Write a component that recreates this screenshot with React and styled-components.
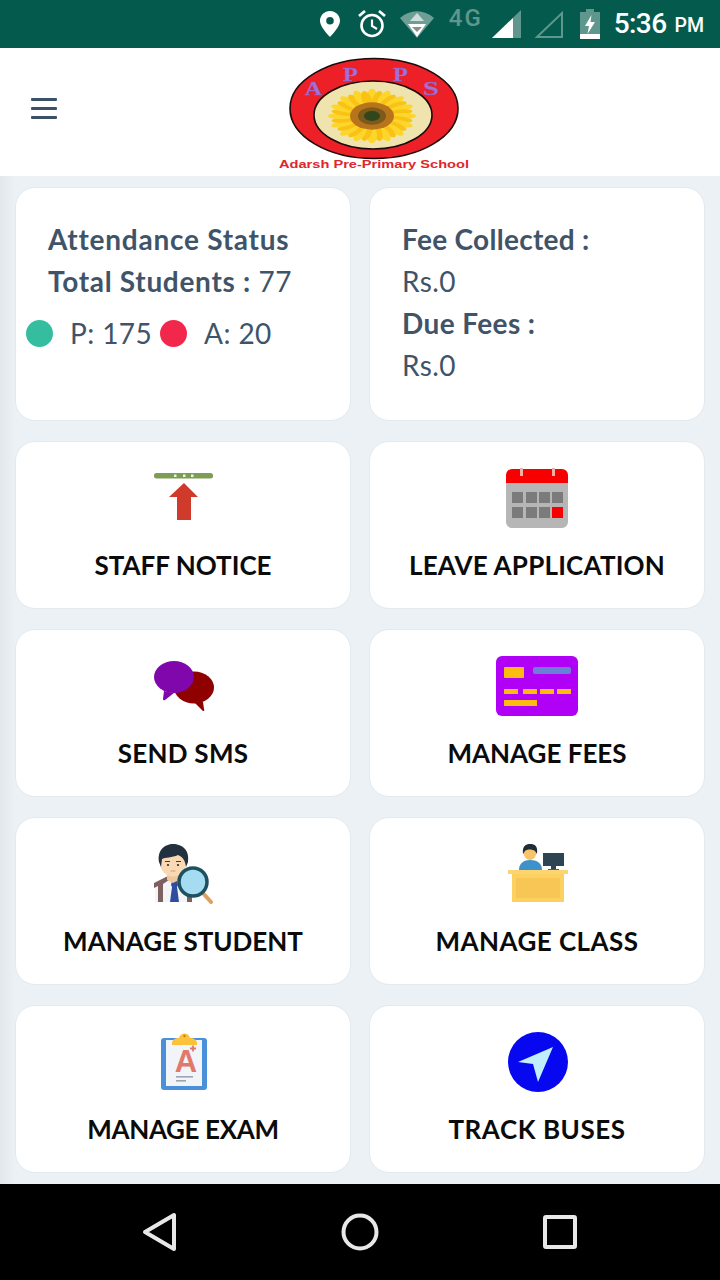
import styled, { createGlobalStyle } from "styled-components";

const GlobalStyle = createGlobalStyle`
  html, body {
    margin: 0;
    padding: 0;
    background: #ebf1f5;
  }
  * {
    box-sizing: border-box;
  }
`;

const Page = styled.div`
  width: 720px;
  height: 1280px;
  display: flex;
  flex-direction: column;
  overflow: hidden;
  font-family: "Lato", "Open Sans", sans-serif;
`;

const StatusBar = styled.div`
  height: 48px;
  background: #055a4e;
  display: flex;
  align-items: center;
  justify-content: flex-end;
  padding-right: 16px;
  color: #fff;
  font-family: "Roboto", sans-serif;
`;

const StatusIcon = styled.svg`
  display: block;
  flex: none;
  margin-left: ${(p) => p.$gap || 0}px;
`;

const NetworkLabel = styled.span`
  margin: 0 9px 12px 15px;
  font-size: 24px;
  line-height: 24px;
  font-weight: 500;
  letter-spacing: 2px;
  color: #5f968d;
`;

const Clock = styled.span`
  margin-left: 14px;
  font-size: 28px;
  line-height: 48px;
  font-weight: 500;
  letter-spacing: -0.6px;
`;

const Meridiem = styled.span`
  margin-left: 8px;
  font-size: 19.5px;
  line-height: 48px;
  font-weight: 500;
  padding-top: 3px;
`;

const Header = styled.header`
  height: 128px;
  background: #fff;
  display: flex;
  align-items: center;
  padding-left: 31px;
`;

const MenuButton = styled.div`
  width: 26px;
  display: flex;
  flex-direction: column;
  gap: 6px;
  margin-top: -8px;

  span {
    display: block;
    height: 3px;
    border-radius: 1px;
    background: #3d5166;
  }
`;

const Logo = styled.svg`
  display: block;
  margin-left: 203px;
`;

const Main = styled.main`
  flex: 1;
  display: grid;
  grid-template-columns: 336px 336px;
  grid-template-rows: 234px repeat(4, 168px);
  gap: 20px 18px;
  padding: 11px 15px;
  background: linear-gradient(to right, #e2e8ec, #ebf1f5 16px);
`;

const Card = styled.section`
  background: #fff;
  border: 1px solid #e3e9ed;
  border-radius: 20px;
`;

const InfoCard = styled(Card)`
  padding: 30px 0 0 32px;
  color: #3f5468;
  font-size: 28px;
  line-height: 42px;
  letter-spacing: 0.4px;
`;

const InfoLine = styled.div`
  white-space: nowrap;
`;

const Strong = styled.span`
  font-weight: 700;
  letter-spacing: ${(p) => p.$tracking}px;
`;

const CountRow = styled.div`
  display: flex;
  align-items: center;
  margin: 10px 0 0 -22px;
  height: 42px;
`;

const Dot = styled.span`
  width: 27px;
  height: 27px;
  border-radius: 50%;
  background: ${(p) => p.$color};
  margin-right: 17px;
  flex: none;
`;

const Count = styled.span`
  margin-right: 8px;
  white-space: nowrap;
`;

const MenuCard = styled(Card)`
  display: flex;
  flex-direction: column;
  align-items: center;
  padding-top: 26px;
`;

const IconSlot = styled.svg`
  display: block;
  flex: none;
`;

const Label = styled.div`
  margin-top: 21px;
  font-size: 26px;
  line-height: 32px;
  font-weight: 700;
  letter-spacing: ${(p) => p.$tracking || 0}px;
  color: #0b0b0b;
  white-space: nowrap;
`;

const NavBar = styled.nav`
  height: 96px;
  background: #000;
  display: grid;
  grid-template-columns: repeat(3, 200px);
  justify-content: center;
  justify-items: center;
  align-items: center;
`;

const PETALS = Array.from({ length: 32 }, (_, i) => (i * 360) / 32);

const LogoMark = () => (
  <Logo width="230" height="125" viewBox="0 0 230 125">
    <ellipse cx="114" cy="58.5" rx="84" ry="50" fill="#ed2027" stroke="#1a0a0a" strokeWidth="1.6" />
    <ellipse cx="113" cy="65" rx="59" ry="34" fill="#efe3ae" stroke="#1a0a0a" strokeWidth="1.6" />
    <g transform="translate(112 66) scale(1 .62)">
      {PETALS.map((a, i) => (
        <ellipse
          key={a}
          cx="0"
          cy={i % 2 ? -27 : -31}
          rx="5"
          ry={i % 2 ? 14 : 13}
          fill={i % 2 ? "#f9c214" : "#fdd62c"}
          transform={`rotate(${a})`}
        />
      ))}
      <circle r="22" fill="#b8741c" />
      <circle r="14" fill="#7c5a1a" />
      <circle r="8" fill="#32461c" />
    </g>
    <g fontFamily="Liberation Serif" fontWeight="700" fontSize="18" fill="#a56fd6" stroke="#8a60b8" strokeWidth=".3">
      <text x="45" y="45" textLength="17" lengthAdjust="spacingAndGlyphs">A</text>
      <text x="83" y="31" textLength="15" lengthAdjust="spacingAndGlyphs">P</text>
      <text x="133" y="31" textLength="15" lengthAdjust="spacingAndGlyphs">P</text>
      <text x="163" y="45" textLength="16" lengthAdjust="spacingAndGlyphs">S</text>
    </g>
    <text x="19" y="118" fontFamily="Liberation Sans" fontWeight="700" fontSize="11" fill="#e0252e" textLength="190" lengthAdjust="spacingAndGlyphs">
      Adarsh Pre-Primary School
    </text>
  </Logo>
);

const NoticeIcon = () => (
  <IconSlot width="60" height="60" viewBox="0 0 60 60">
    <rect x="1" y="5" width="59" height="5.5" rx="2.5" fill="#7d9d55" />
    <rect x="21" y="6.5" width="2.5" height="2.5" fill="#eef3e6" />
    <rect x="30" y="6.5" width="2.5" height="2.5" fill="#eef3e6" />
    <rect x="38" y="6.5" width="2.5" height="2.5" fill="#eef3e6" />
    <path d="M31 15 L45 29 H38 V52 H24 V29 H16 Z" fill="#d03a2a" />
  </IconSlot>
);

const CalendarIcon = () => (
  <IconSlot width="62" height="60" viewBox="0 0 62 60">
    <path d="M0 15 H62 V54 a6 6 0 0 1 -6 6 H6 a6 6 0 0 1 -6 -6 Z" fill="#b6b6b6" />
    <path d="M0 15 V7 a6 6 0 0 1 6 -6 H56 a6 6 0 0 1 6 6 V15 Z" fill="#f60000" />
    <rect x="14" y="0" width="3" height="8" fill="#e9b4a6" />
    <rect x="46" y="0" width="3" height="8" fill="#e9b4a6" />
    {[6, 20, 33, 46].map((x) => (
      <rect key={x} x={x} y="24" width="11" height="11" fill="#7b7b7b" />
    ))}
    {[6, 20, 33].map((x) => (
      <rect key={x} x={x} y="39" width="11" height="11" fill="#7b7b7b" />
    ))}
    <rect x="46" y="39" width="11" height="11" fill="#f60000" />
  </IconSlot>
);

const ChatIcon = () => (
  <IconSlot width="62" height="60" viewBox="-1 0 62 60">
    <ellipse cx="41" cy="31.5" rx="20" ry="16" fill="#8f0000" />
    <path d="M41 46 L50 55 Q52 55 51 53 L50 46 Z" fill="#8f0000" />
    <ellipse cx="21" cy="21" rx="20" ry="16" fill="#7f07ac" />
    <path d="M11 35 L10 43 Q10 45 12 44 L21 37 Z" fill="#7f07ac" />
  </IconSlot>
);

const FeesIcon = () => (
  <IconSlot width="82" height="60" viewBox="0 0 82 60">
    <rect width="82" height="60" rx="6" fill="#b000f5" />
    <rect x="8" y="11" width="20" height="11" rx="1" fill="#fdbb12" />
    <rect x="37" y="11" width="38" height="7" rx="2" fill="#6a7fd6" />
    {[8, 27, 44, 61].map((x) => (
      <rect key={x} x={x} y="33" width="14" height="5" fill="#fdbb12" />
    ))}
    <rect x="8" y="44" width="33" height="6" fill="#fdbb12" />
  </IconSlot>
);

const StudentIcon = () => (
  <IconSlot width="60" height="60" viewBox="0 0 60 60">
    <path d="M2 38 L12 33 H28 L38 38 V58 H2 Z" fill="#f3f4f7" />
    <path d="M1 39 L15 32 L16 36 L10 40 V58 H5 V42 L1 44 Z" fill="#7e605e" />
    <rect x="34" y="44" width="5" height="14" fill="#7e605e" />
    <path d="M19 37 H24 L25 41 L24 43 L26 58 H17 L19 43 L18 41 Z" fill="#2f4da0" />
    <path d="M14 26 H26 V36 L20 39 L14 36 Z" fill="#efc79c" />
    <ellipse cx="20" cy="19" rx="13" ry="13.5" fill="#f9d9b4" />
    <circle cx="15" cy="21" r="1.1" fill="#3a2a20" />
    <circle cx="25" cy="21" r="1.1" fill="#3a2a20" />
    <path d="M12 17.5 H17 M23 17.5 H28" stroke="#4a3a30" strokeWidth="1" />
    <path d="M17.5 27 H22.5" stroke="#d99a80" strokeWidth="1" />
    <path d="M6 18 C4 6 12 0 20 0 C29 0 37 6 35 18 L33 23 C32 15 29 13 25 11 C19 14 12 13 9 15 L8 23 Z" fill="#22303f" />
    <line x1="48" y1="47" x2="58" y2="58" stroke="#e0a060" strokeWidth="4" strokeLinecap="round" />
    <circle cx="40" cy="38" r="14" fill="#a5dcf2" stroke="#1e5160" strokeWidth="3.5" />
  </IconSlot>
);

const ClassIcon = () => (
  <IconSlot width="62" height="60" viewBox="-2 0 62 60">
    <path d="M11 26 C11 19 16 16 22 16 C29 16 34 19 34 26 Z" fill="#3d93c9" />
    <ellipse cx="22" cy="8" rx="6.5" ry="8" fill="#f7c46a" />
    <path d="M15 10 C14 2 18 0 22 0 C27 0 30 2 29 10 L27 7 C24 5 19 5 17 7 Z" fill="#1f2d3a" />
    <rect x="35" y="9" width="21" height="13" fill="#2d4552" />
    <rect x="43" y="22" width="5" height="3" fill="#2d4552" />
    <rect x="40" y="25" width="11" height="2" fill="#4b5c66" />
    <rect x="0" y="26" width="60" height="4" fill="#fbd66f" />
    <rect x="4" y="30" width="52" height="28" fill="#fdd062" />
    <rect x="8" y="34" width="44" height="20" fill="#f8c654" />
  </IconSlot>
);

const ExamIcon = () => (
  <IconSlot width="60" height="60" viewBox="0 0 60 60">
    <rect x="8" y="6" width="46" height="52" rx="3" fill="#4a90d9" />
    <rect x="13" y="8" width="36" height="46" fill="#f1f4f8" />
    <path d="M19 13 V11 C19 8 22 6 26 6 C27 0 36 0 37 6 C41 6 44 8 44 11 V13 Z" fill="#fcc33a" />
    <circle cx="31.5" cy="4" r="1.2" fill="#c77a20" />
    <text x="33" y="40" textAnchor="middle" fontFamily="Liberation Sans" fontWeight="700" fontSize="31" fill="#e0786c">
      A
    </text>
    <path d="M37 16.5 H43 M40 13.5 V19.5" stroke="#e0786c" strokeWidth="1.8" />
    <rect x="23" y="44" width="17" height="1.6" fill="#9aa5b1" />
    <rect x="23" y="48" width="10" height="1.6" fill="#9aa5b1" />
  </IconSlot>
);

const BusIcon = () => (
  <IconSlot width="62" height="60" viewBox="-2 0 62 60">
    <circle cx="30" cy="30" r="30" fill="#0808f0" />
    <path d="M45 15 L10 30 L25 32 L30 50 Z" fill="#bfeefc" />
  </IconSlot>
);

const MENU = [
  { label: "STAFF NOTICE", Icon: NoticeIcon },
  { label: "LEAVE APPLICATION", Icon: CalendarIcon, tracking: 0.2 },
  { label: "SEND SMS", Icon: ChatIcon, tracking: 0.25 },
  { label: "MANAGE FEES", Icon: FeesIcon },
  { label: "MANAGE STUDENT", Icon: StudentIcon },
  { label: "MANAGE CLASS", Icon: ClassIcon, tracking: 0.45 },
  { label: "MANAGE EXAM", Icon: ExamIcon, tracking: -0.35 },
  { label: "TRACK BUSES", Icon: BusIcon, tracking: 0.55 },
];

const App = () => {
  return (
    <Page>
      <GlobalStyle />
      <StatusBar>
        <StatusIcon width="20" height="26" viewBox="0 0 20 26">
          <path
            fillRule="evenodd"
            d="M10 0 C4.5 0 0 4.3 0 9.8 C0 16.5 10 26 10 26 C10 26 20 16.5 20 9.8 C20 4.3 15.5 0 10 0 Z M10 13.5 A3.8 3.8 0 1 1 10 5.9 A3.8 3.8 0 0 1 10 13.5 Z"
            fill="#fff"
          />
        </StatusIcon>
        <StatusIcon $gap={17} width="30" height="30" viewBox="0 0 30 30" fill="none" stroke="#fff">
          <circle cx="15" cy="16.5" r="10.5" strokeWidth="2.6" />
          <path d="M15 10.5 V17 L20 20" strokeWidth="2.2" />
          <path d="M2 7 L8 2 M28 7 L22 2" strokeWidth="2.8" />
        </StatusIcon>
        <StatusIcon $gap={13} width="34" height="28" viewBox="0 0 34 28">
          <path d="M0 8 C10 -1 24 -1 34 8 L17 28 Z" fill="#6e9f97" />
          <path d="M8 14 H26 L17 27 Z" fill="#fff" />
          <path d="M17 3 L24 11 H10 Z" fill="#cfdedb" />
          <path d="M12 17 H22 L17 22 Z" fill="#8a8f8c" />
        </StatusIcon>
        <NetworkLabel>4G</NetworkLabel>
        <StatusIcon width="29" height="28" viewBox="0 0 29 28">
          <path d="M0 28 L29 0 V28 Z" fill="#5f968d" />
          <path d="M0 28 L21 8 V28 Z" fill="#fff" />
        </StatusIcon>
        <StatusIcon $gap={13} width="29" height="28" viewBox="0 0 29 28">
          <path d="M3 27 L28 3 V27 Z" fill="none" stroke="#5f968d" strokeWidth="2" />
        </StatusIcon>
        <StatusIcon $gap={17} width="20" height="30" viewBox="0 0 20 30">
          <path d="M6 0 H14 V3 H20 V30 H0 V3 H6 Z" fill="#5f968d" />
          <rect y="25" width="20" height="5" fill="#fff" />
          <path d="M11.5 6 L5 17 H9 L7.5 25 L15 13 H10.5 Z" fill="#fff" />
        </StatusIcon>
        <Clock>5:36</Clock>
        <Meridiem>PM</Meridiem>
      </StatusBar>

      <Header>
        <MenuButton>
          <span />
          <span />
          <span />
        </MenuButton>
        <LogoMark />
      </Header>

      <Main>
        <InfoCard>
          <InfoLine>
            <Strong $tracking={0.75}>Attendance Status</Strong>
          </InfoLine>
          <InfoLine>
            <Strong $tracking={0.7}>Total Students :</Strong> 77
          </InfoLine>
          <CountRow>
            <Dot $color="#35bda0" />
            <Count>P: 175</Count>
            <Dot $color="#f2274c" />
            <Count>A: 20</Count>
          </CountRow>
        </InfoCard>
        <InfoCard>
          <InfoLine>
            <Strong $tracking={0.3}>Fee Collected :</Strong>
          </InfoLine>
          <InfoLine>Rs.0</InfoLine>
          <InfoLine>
            <Strong $tracking={0.4}>Due Fees :</Strong>
          </InfoLine>
          <InfoLine>Rs.0</InfoLine>
        </InfoCard>
        {MENU.map(({ label, Icon, tracking }) => (
          <MenuCard key={label}>
            <Icon />
            <Label $tracking={tracking}>{label}</Label>
          </MenuCard>
        ))}
      </Main>

      <NavBar>
        <svg width="36" height="40" viewBox="0 0 36 40" fill="none" stroke="#e8e8e8" strokeWidth="4" strokeLinejoin="round">
          <path d="M32 3 V37 L3 20 Z" />
        </svg>
        <svg width="38" height="38" viewBox="0 0 38 38" fill="none" stroke="#e8e8e8" strokeWidth="4">
          <circle cx="19" cy="19" r="16.5" />
        </svg>
        <svg width="34" height="34" viewBox="0 0 34 34" fill="none" stroke="#e8e8e8" strokeWidth="4" strokeLinejoin="round">
          <rect x="2" y="2" width="30" height="30" rx="1" />
        </svg>
      </NavBar>
    </Page>
  );
};

export default App;
